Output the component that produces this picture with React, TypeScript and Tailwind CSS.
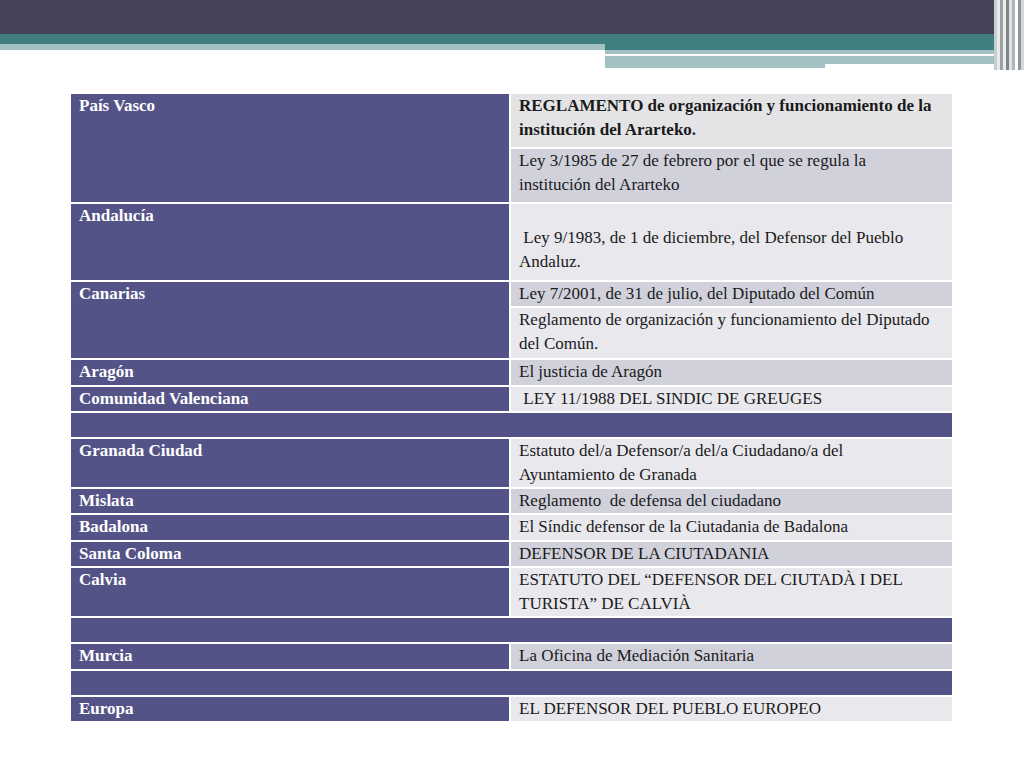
export default function App() {
  const P = "bg-[#545388]";
  const D = "bg-[#d0d1db]";
  const L = "bg-[#e8e8ed]";
  type R = { h: number; left?: string; right?: { t: string; c: string; h: number; pt?: string }[]; empty?: boolean };
  const rows: R[] = [
    { h: 108, left: "País Vasco", right: [
      { t: "REGLAMENTO de organización y funcionamiento de la institución del Ararteko.", c: "bg-[#e4e4e6] font-bold", h: 53 },
      { t: "Ley 3/1985 de 27 de febrero por el que se regula la institución del Ararteko", c: D, h: 53 },
    ] },
    { h: 76, left: "Andalucía", right: [{ t: "\u00a0Ley 9/1983, de 1 de diciembre, del Defensor del Pueblo Andaluz.", c: L, h: 76, pt: "pt-[22px]" }] },
    { h: 76, left: "Canarias", right: [
      { t: "Ley 7/2001, de 31 de julio, del Diputado del Común", c: D, h: 24 },
      { t: "Reglamento de organización y funcionamiento del Diputado del Común.", c: L, h: 50 },
    ] },
    { h: 25, left: "Aragón", right: [{ t: "El justicia de Aragón", c: D, h: 25 }] },
    { h: 24, left: "Comunidad Valenciana", right: [{ t: "\u00a0LEY 11/1988 DEL SINDIC DE GREUGES", c: L, h: 24 }] },
    { h: 24, empty: true },
    { h: 48, left: "Granada Ciudad", right: [{ t: "Estatuto del/a Defensor/a del/a Ciudadano/a del Ayuntamiento de Granada", c: L, h: 48 }] },
    { h: 24, left: "Mislata", right: [{ t: "Reglamento\u00a0 de defensa del ciudadano", c: D, h: 24 }] },
    { h: 25, left: "Badalona", right: [{ t: "El Síndic defensor de la Ciutadania de Badalona", c: L, h: 25 }] },
    { h: 24, left: "Santa Coloma", right: [{ t: "DEFENSOR DE LA CIUTADANIA", c: D, h: 24 }] },
    { h: 48, left: "Calvia", right: [{ t: "ESTATUTO DEL “DEFENSOR DEL CIUTADÀ I DEL TURISTA” DE CALVIÀ", c: L, h: 48 }] },
    { h: 24, empty: true },
    { h: 25, left: "Murcia", right: [{ t: "La Oficina de Mediación Sanitaria", c: D, h: 25 }] },
    { h: 24, empty: true },
    { h: 24, left: "Europa", right: [{ t: "EL DEFENSOR DEL PUEBLO EUROPEO", c: L, h: 24 }] },
  ];
  return (
    <div className="w-[1024px] h-[768px] bg-white overflow-hidden relative" style={{ fontFamily: "'Liberation Serif', serif" }}>
      <div className="h-[34px] bg-[#454459]" />
      <div className="flex">
        <div className="w-[605px]">
          <div className="h-[10px] bg-[#3f7f80]" />
          <div className="h-[6px] bg-[#a3c0c2]" />
        </div>
        <div className="flex-1">
          <div className="h-[16px] bg-[#3f7f80]" />
          <div className="h-[4px] bg-[#a3c0c2] w-[390px]" />
          <div className="h-[2px] bg-white" />
          <div className="h-[8px] bg-[#a3c0c2] w-[390px]" />
          <div className="h-[4px] bg-[#a3c0c2] w-[220px]" />
        </div>
      </div>
      <div className="absolute right-0 top-0 w-[30px] h-[70px] flex">
        {["#c9cdd0","#e9eaeb","#9aa0a4","#eeeeee","#7f868a","#dfe2e3","#b0b5b8","#ffffff","#8f969a","#d5d8da"].map((c, i) => (
          <div key={i} className="flex-1 h-full" style={{ background: c }} />
        ))}
      </div>
      <div className="ml-[71px] mt-[26px] w-[881px] flex flex-col gap-[2px] text-[17px] leading-[24px]">
        {rows.map((r, i) =>
          r.empty ? (
            <div key={i} className={P} style={{ height: r.h }} />
          ) : (
            <div key={i} className="flex gap-[2px]" style={{ height: r.h }}>
              <div className={`${P} w-[438px] px-[8px] text-white font-bold`}>{r.left}</div>
              <div className="flex-1 flex flex-col gap-[2px]">
                {r.right!.map((s, j) => (
                  <div key={j} className={`${s.c} pl-[8px] pr-[12px] ${s.pt ?? ""} text-[#1a1a1a]`} style={{ height: s.h }}>
                    {s.t}
                  </div>
                ))}
              </div>
            </div>
          )
        )}
      </div>
    </div>
  );
}
